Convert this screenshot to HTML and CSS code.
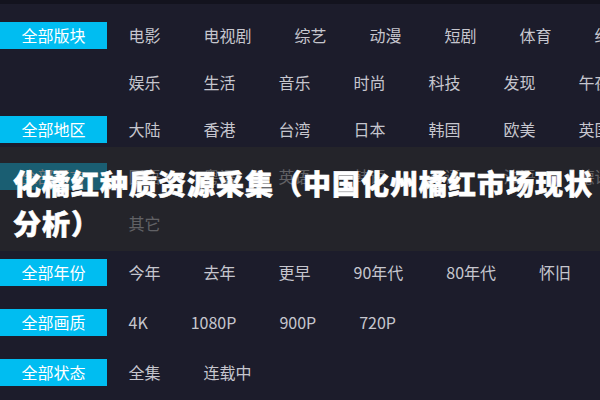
FILE: index.html
```html
<!DOCTYPE html>
<html lang="zh-CN">
<head>
<meta charset="utf-8">
<title>化橘红种质资源采集</title>
<link rel="stylesheet" href="styles.css">
</head>
<body>
<div class="page">
  <div class="topbar"></div>
  <div class="filters">
    <div class="row">
      <span class="label">全部版块</span>
      <span class="item">电影</span><span class="item">电视剧</span><span class="item">综艺</span><span class="item">动漫</span><span class="item">短剧</span><span class="item">体育</span><span class="item">纪录</span>
    </div>
    <div class="row">
      <span class="label blank"></span>
      <span class="item">娱乐</span><span class="item">生活</span><span class="item">音乐</span><span class="item">时尚</span><span class="item">科技</span><span class="item">发现</span><span class="item">午夜</span>
    </div>
    <div class="row">
      <span class="label">全部地区</span>
      <span class="item">大陆</span><span class="item">香港</span><span class="item">台湾</span><span class="item">日本</span><span class="item">韩国</span><span class="item">欧美</span><span class="item">英国</span>
    </div>
    <div class="row">
      <span class="label">全部语言</span>
      <span class="item">国语</span><span class="item">粤语</span><span class="item">英语</span><span class="item">韩语</span><span class="item">日语</span><span class="item">法语</span><span class="item">德语</span>
    </div>
    <div class="row">
      <span class="label blank"></span>
      <span class="item">其它</span>
    </div>
    <div class="row wide">
      <span class="label">全部年份</span>
      <span class="item">今年</span><span class="item">去年</span><span class="item">更早</span><span class="item">90年代</span><span class="item">80年代</span><span class="item">怀旧</span>
    </div>
    <div class="row wide">
      <span class="label">全部画质</span>
      <span class="item">4K</span><span class="item">1080P</span><span class="item">900P</span><span class="item">720P</span>
    </div>
    <div class="row wide">
      <span class="label">全部状态</span>
      <span class="item">全集</span><span class="item">连载中</span>
    </div>
  </div>
  <div class="banner">
    <h1 class="title">化橘红种质资源采集（中国化州橘红市场现状分析）</h1>
  </div>
</div>
</body>
</html>
```
FILE: styles.css
```css
html, body {
  margin: 0;
  padding: 0;
}
body {
  width: 600px;
  height: 400px;
  overflow: hidden;
  background: #1c1c2b;
  font-family: "Noto Sans CJK SC", "Noto Sans", sans-serif;
}
.page {
  position: relative;
  width: 600px;
  height: 400px;
  overflow: hidden;
  background: #1c1c2b;
}
.topbar {
  height: 4px;
  background: #13131e;
}
.filters {
  padding-top: 8px;
}
.row {
  display: flex;
  align-items: center;
  height: 47px;
  white-space: nowrap;
}
.row.wide {
  height: 50px;
}
.label {
  flex: none;
  width: 107px;
  height: 27px;
  line-height: 27px;
  background: #00bdf1;
  color: #ffffff;
  font-size: 16px;
  text-align: center;
}
.label.blank {
  background: transparent;
}
.item {
  flex: none;
  padding: 0 21.5px;
  color: #c6c6ce;
  font-size: 16px;
  line-height: 27px;
}
.banner {
  position: absolute;
  left: 0;
  top: 147px;
  width: 600px;
  height: 104px;
  background: rgba(40, 40, 42, 0.64);
  box-sizing: border-box;
  padding: 16px 0 0 13px;
}
.title {
  margin: 0;
  color: #ffffff;
  font-size: 28px;
  font-weight: 900;
  line-height: 40px;
  letter-spacing: 1px;
  -webkit-text-stroke: 0.6px #ffffff;
}
```
